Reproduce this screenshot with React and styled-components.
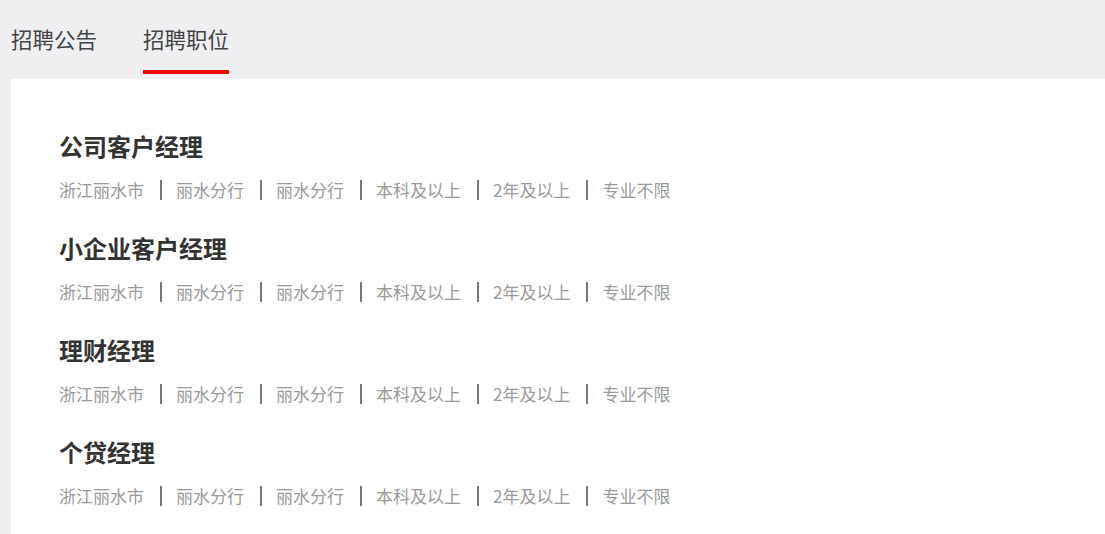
import React, { useState } from "react";
import styled, { createGlobalStyle } from "styled-components";

const GlobalStyle = createGlobalStyle`
  html, body {
    margin: 0;
    padding: 0;
    background: #efeff1;
    font-family: "Noto Sans CJK SC", "Noto Sans", sans-serif;
  }
`;

const jobs = [
  { title: "公司客户经理", tags: ["浙江丽水市", "丽水分行", "丽水分行", "本科及以上", "2年及以上", "专业不限"] },
  { title: "小企业客户经理", tags: ["浙江丽水市", "丽水分行", "丽水分行", "本科及以上", "2年及以上", "专业不限"] },
  { title: "理财经理", tags: ["浙江丽水市", "丽水分行", "丽水分行", "本科及以上", "2年及以上", "专业不限"] },
  { title: "个贷经理", tags: ["浙江丽水市", "丽水分行", "丽水分行", "本科及以上", "2年及以上", "专业不限"] },
];

const App = () => {
  const [active, setActive] = useState(1);
  const tabs = ["招聘公告", "招聘职位"];

  return (
    <Page>
      <GlobalStyle />
      <Tabs>
        {tabs.map((tab, index) => (
          <Tab key={index} $active={active === index} onClick={() => setActive(index)}>
            {tab}
          </Tab>
        ))}
      </Tabs>
      <Panel>
        {jobs.map((job, index) => (
          <Job key={index}>
            <JobTitle>{job.title}</JobTitle>
            <Meta>
              {job.tags.map((tag, i) => (
                <MetaItem key={i} $first={i === 0}>
                  {tag}
                </MetaItem>
              ))}
            </Meta>
          </Job>
        ))}
      </Panel>
    </Page>
  );
};

const Page = styled.div`
  padding-left: 11px;
`;

const Tabs = styled.div`
  display: flex;
  gap: 46px;
  margin-bottom: 5px;
`;

const Tab = styled.div`
  height: 74px;
  box-sizing: border-box;
  padding-top: 22px;
  font-size: 21.5px;
  line-height: 34px;
  color: #444;
  cursor: pointer;
  border-bottom: 4px solid ${(p) => (p.$active ? "#ff0000" : "transparent")};
`;

const Panel = styled.div`
  background: #fff;
  padding: 50px 48px 0;
  min-height: 455px;
  box-sizing: border-box;
`;

const Job = styled.div`
  margin-bottom: 29px;
`;

const JobTitle = styled.h3`
  margin: 0;
  font-size: 24px;
  line-height: 34px;
  font-weight: 700;
  color: #333;
`;

const Meta = styled.div`
  display: flex;
  align-items: center;
  margin-top: 15px;
  font-size: 17px;
  line-height: 24px;
  color: #999;
`;

const MetaItem = styled.span`
  display: flex;
  align-items: center;
  &::before {
    content: "";
    display: ${(p) => (p.$first ? "none" : "block")};
    width: 2px;
    height: 20px;
    background: #777;
    margin: 0 14px 0 16px;
  }
`;

export default App;
